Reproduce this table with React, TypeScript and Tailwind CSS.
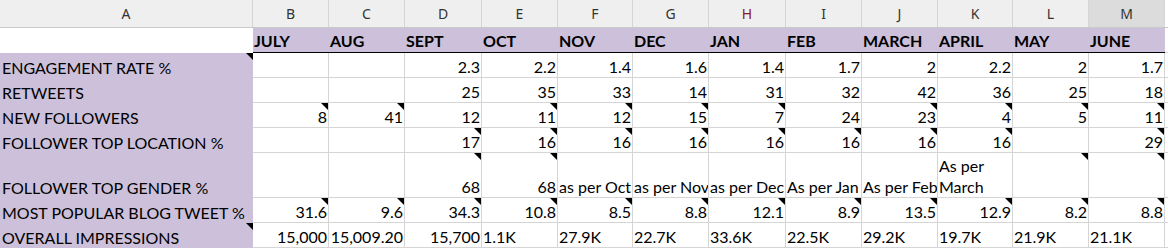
const COLS = [
  "w-[253px]",
  "w-[76px]",
  "w-[76px]",
  "w-[77px]",
  "w-[76px]",
  "w-[75px]",
  "w-[76px]",
  "w-[77px]",
  "w-[76px]",
  "w-[76px]",
  "w-[75px]",
  "w-[76px]",
  "w-[76px]",
];
const LETTERS = ["A", "B", "C", "D", "E", "F", "G", "H", "I", "J", "K", "L", "M"];
const MONTHS = ["JULY", "AUG", "SEPT", "OCT", "NOV", "DEC", "JAN", "FEB", "MARCH", "APRIL", "MAY", "JUNE"];

type Cell = { v: string; left?: boolean; note?: boolean };

type Row = { label: string; note?: boolean; tall?: boolean; cells: Cell[] };

const n = (v: string, note = false): Cell => ({ v, note });
const t = (v: string, note = false): Cell => ({ v, left: true, note });

const ROWS: Row[] = [
  {
    label: "ENGAGEMENT RATE %",
    note: true,
    cells: ["", "", "2.3", "2.2", "1.4", "1.6", "1.4", "1.7", "2", "2.2", "2", "1.7"].map((v) => n(v)),
  },
  {
    label: "RETWEETS",
    cells: ["", "", "25", "35", "33", "14", "31", "32", "42", "36", "25", "18"].map((v) => n(v)),
  },
  {
    label: "NEW FOLLOWERS",
    cells: [
      n("8", true), n("41", true), n("12"), n("11", true), n("12", true), n("15", true),
      n("7", true), n("24"), n("23", true), n("4", true), n("5", true), n("11", true),
    ],
  },
  {
    label: "FOLLOWER TOP LOCATION %",
    cells: [
      n(""), n(""), n("17", true), n("16", true), n("16", true), n("16", true),
      n("16", true), n("16", true), n("16", true), n("16", true), n(""), n("29", true),
    ],
  },
  {
    label: "FOLLOWER TOP GENDER %",
    tall: true,
    cells: [
      n(""), n(""), n("68", true), n("68", true), t("as per Oct"), t("as per Nov"),
      t("as per Dec"), t("As per Jan"), t("As per Feb"), t("As per March"), n("", true), n("", true),
    ],
  },
  {
    label: "MOST POPULAR BLOG TWEET %",
    cells: ["31.6", "9.6", "34.3", "10.8", "8.5", "8.8", "12.1", "8.9", "13.5", "12.9", "8.2", "8.8"].map((v) => n(v, true)),
  },
  {
    label: "OVERALL IMPRESSIONS",
    note: true,
    cells: [
      n("15,000"), n("15,009.20"), n("15,700"), t("1.1K"), t("27.9K"), t("22.7K"),
      t("33.6K"), t("22.5K"), t("29.2K"), t("19.7K"), t("21.9K"), t("21.1K"),
    ],
  },
];

function Note() {
  return (
    <span className="absolute top-0 right-0 w-0 h-0 border-t-[7px] border-l-[7px] border-t-black border-l-transparent" />
  );
}

export default function App() {
  return (
    <div className="w-[1168px] h-[248px] overflow-hidden bg-white text-black font-['Lato','Liberation_Sans',sans-serif] text-[16px]">
      {/* column letters */}
      <div className="flex h-[28px] bg-[#efefef] border-b border-[#c9c9c9]">
        {LETTERS.map((l, i) => (
          <div
            key={l}
            className={`${COLS[i]} shrink-0 flex items-center justify-center border-r border-[#d5d5d5] font-['Noto_Sans',sans-serif] text-[14px] ${
              l === "H" ? "text-[#8b1a1a]" : "text-[#333]"
            } ${l === "M" ? "bg-[#dcdcdc]" : ""}`}
          >
            {l}
          </div>
        ))}
        <div className="flex-1 bg-white" />
      </div>

      {/* month header */}
      <div className="flex h-[25px]">
        <div className={`${COLS[0]} shrink-0 bg-white`} />
        {MONTHS.map((m, i) => (
          <div
            key={m}
            className={`${COLS[i + 1]} shrink-0 bg-[#ccc0da] border-b border-black flex items-end pl-[1px] font-bold leading-[22px]`}
          >
            {m}
          </div>
        ))}
        <div className="flex-1 border-b border-[#d5d5d5]" />
      </div>

      {ROWS.map((r) => (
        <div key={r.label} className={`flex ${r.tall ? "h-[45px]" : "h-[25px]"}`}>
          <div className={`${COLS[0]} shrink-0 relative bg-[#ccc0da] flex items-end pl-[2px] leading-[21px] whitespace-nowrap`}>
            {r.label}
            {r.note && <Note />}
          </div>
          {r.cells.map((c, i) => (
            <div
              key={i}
              className={`${COLS[i + 1]} shrink-0 relative overflow-hidden border-r border-b border-[#d5d5d5] flex items-end leading-[21px] ${
                c.left ? "justify-start pl-[1px]" : "justify-end pr-[1px]"
              } ${c.v === "As per March" ? "whitespace-normal" : "whitespace-nowrap"}`}
            >
              <span className="block">{c.v}</span>
              {c.note && <Note />}
            </div>
          ))}
          <div className="flex-1 border-b border-[#d5d5d5]" />
        </div>
      ))}
    </div>
  );
}
